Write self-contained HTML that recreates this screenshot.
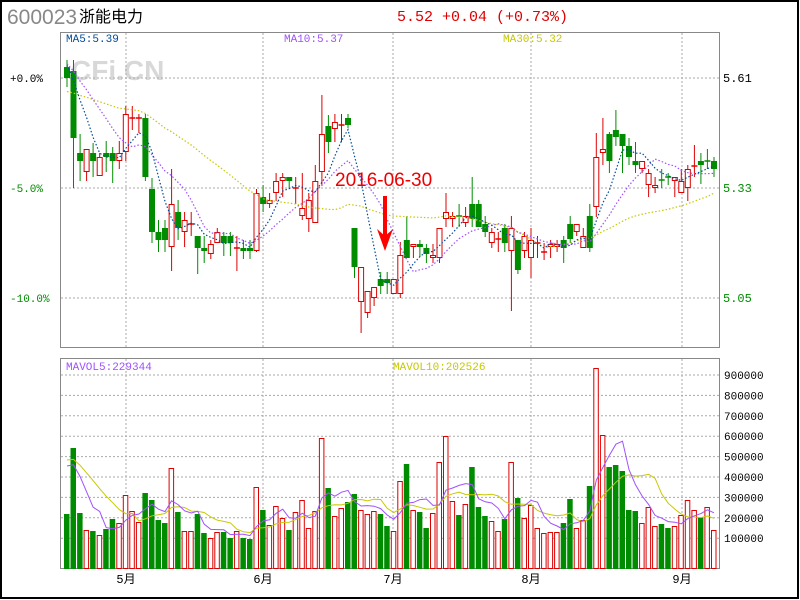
<!DOCTYPE html>
<html><head><meta charset="utf-8"><style>
html,body{margin:0;padding:0;background:#fff;width:800px;height:600px;overflow:hidden}
svg{display:block}
text{font-family:"Liberation Mono","Noto Sans CJK SC",monospace}
</style></head><body>
<svg id="s" width="800" height="600" xmlns="http://www.w3.org/2000/svg">
<rect x="1" y="1" width="797" height="597" fill="#fff" stroke="#000" stroke-width="2"/>
<text x="7" y="24" font-size="21" fill="#888" style="font-family:'Liberation Sans',sans-serif">600023</text>
<text x="79" y="22" font-size="16" fill="#000" style="font-family:'Liberation Sans','Noto Sans CJK SC',sans-serif">浙能电力</text>
<text x="397" y="21" font-size="15" fill="#d00">5.52 +0.04 (+0.73%)</text>
<text x="71" y="80" font-size="28" font-weight="bold" fill="#d8d8d8" style="font-family:'Liberation Sans',sans-serif">CFi.CN</text>
<g id="g"></g>
</svg>
<script>
var g=document.getElementById('g'),S='';
var cols="GGGRGRGGRRRRGGGGRGRRGGRRGGRGGRGRRRGRRRRRGRRGGRRRGGRRGRGGRRRRGRGGGRRGRGRRRRRRGGRRGRRGGGGGRRRGGRRRRG";
var vt=[514,448,513,530,531,535,529,519,523,495,511,522,493,500,520,523,468,512,531,531,514,533,538,532,532,538,531,538,539,487,510,525,506,518,530,512,500,528,511,438,488,516,508,502,494,510,514,511,514,526,531,481,464,510,512,528,513,462,436,501,515,504,467,507,516,521,531,519,462,498,518,505,528,533,532,532,523,499,528,520,486,368,435,467,465,471,510,511,523,507,526,524,528,526,515,500,510,517,507,530];
var c=[[67,78,60,87],[71,138,60,188],[153,161,134,181],[149,172,149,181],[153,161,143,177],[157,176,153,176],[153,157,141,172],[153,161,147,183],[153,161,141,169],[114,152,106,161],
[118,119,106,130],[118,119,114,133],[118,177,114,181],[189,232,178,243],[232,240,220,252],[228,240,220,252],[204,247,169,271],[212,228,200,240],[220,232,212,247],[224,225,212,236],
[236,248,236,274],[248,251,236,263],[244,254,240,259],[232,243,228,243],[236,243,232,256],[236,243,232,256],[248,249,236,271],[248,251,240,259],[248,251,240,259],[193,251,189,252],
[197,204,185,212],[200,204,193,208],[181,193,173,201],[177,181,173,197],[177,181,177,188],[188,189,177,204],[208,216,173,220],[200,219,193,232],[181,223,165,223],[134,172,95,185],
[126,142,115,153],[122,129,114,142],[125,126,114,142],[118,125,114,128],[228,267,228,278],[267,302,267,333],[291,313,291,318],[287,298,287,306],[279,286,272,294],[279,283,272,294],
[279,294,279,294],[255,294,242,298],[240,258,216,258],[244,247,244,258],[244,247,240,257],[248,254,244,263],[255,258,244,263],[228,258,228,263],[212,219,193,227],[216,219,212,227],
[216,217,204,227],[216,223,207,227],[204,219,177,227],[204,227,200,227],[224,232,216,237],[232,243,228,248],[239,240,232,252],[228,243,224,252],[228,251,216,311],[240,270,240,274],
[236,251,232,258],[240,258,228,278],[243,244,236,258],[252,253,243,260],[244,247,240,258],[244,247,240,252],[240,248,236,263],[224,239,216,243],[224,232,224,236],[236,248,228,248],
[216,248,204,252],[157,207,133,217],[149,153,118,165],[134,161,132,173],[130,137,110,146],[134,146,134,173],[146,157,138,165],[161,165,142,173],[161,169,161,173],[173,185,169,197],
[185,188,177,193],[180,181,169,188],[177,178,173,185],[177,181,177,197],[181,193,169,193],[169,188,165,201],[166,167,145,177],[161,165,153,184],[161,162,149,169],[161,169,157,177]];
function X(i){return 64+i*6.535;}
var vx=[126,263,393,531,682];
vx.forEach(function(x){S+='<line x1="'+x+'" y1="33" x2="'+x+'" y2="347" stroke="#aaa" stroke-dasharray="2,2"/>';S+='<line x1="'+x+'" y1="359" x2="'+x+'" y2="568" stroke="#aaa" stroke-dasharray="2,2"/>';});
[78,188,298].forEach(function(y){S+='<line x1="61" y1="'+y+'" x2="719" y2="'+y+'" stroke="#aaa" stroke-dasharray="2,2"/>';});
var vl=['900000','800000','700000','600000','500000','400000','300000','200000','100000'];
for(var k=0;k<9;k++){var y=375+k*20.4;S+='<line x1="61" y1="'+y+'" x2="719" y2="'+y+'" stroke="#aaa" stroke-dasharray="2,2"/>';S+='<text x="724" y="'+(y+4)+'" font-size="11" fill="#000">'+vl[k]+'</text>';}
S+='<rect x="60.5" y="32.5" width="659" height="315" fill="none" stroke="#888"/>';
S+='<rect x="60.5" y="358.5" width="659" height="210" fill="none" stroke="#888"/>';
var vh=[];
for(var i=0;i<100;i++){var x=X(i),t=vt[i];vh.push(569-t);
 if(cols[i]=='G')S+='<rect x="'+x.toFixed(1)+'" y="'+t+'" width="5.5" height="'+(569-t)+'" fill="#008c00"/>';
 else S+='<rect x="'+(x+0.5).toFixed(1)+'" y="'+(t+0.5)+'" width="4.5" height="'+(568-t)+'" fill="#fff" stroke="#d00"/>';}
var cl=[];
for(var i=0;i<100;i++){var x=X(i),d=c[i],r=cols[i]=='R',col=r?'#d00':'#008c00';cl.push(r?d[0]:d[1]);
 var cx=(x+3).toFixed(1);
 S+='<line x1="'+cx+'" y1="'+d[2]+'" x2="'+cx+'" y2="'+d[3]+'" stroke="'+col+'"/>';
 if(d[1]-d[0]<=1)S+='<line x1="'+x.toFixed(1)+'" y1="'+d[0]+'" x2="'+(x+6).toFixed(1)+'" y2="'+d[0]+'" stroke="'+col+'" stroke-width="1.5"/>';
 else if(r)S+='<rect x="'+(x+0.5).toFixed(1)+'" y="'+(d[0]+0.5)+'" width="5" height="'+(d[1]-d[0]-1)+'" fill="#fff" stroke="#d00"/>';
 else S+='<rect x="'+x.toFixed(1)+'" y="'+d[0]+'" width="6" height="'+(d[1]-d[0])+'" fill="#008c00"/>';}
function ma(arr,n,pad,dash,color,sw){var p='';for(var i=0;i<arr.length;i++){var s=0;for(var j=i-n+1;j<=i;j++)s+=(j<0?pad:arr[j]);var v=s/n;p+=(i?'L':'M')+(X(i)+3).toFixed(1)+' '+v.toFixed(1);}
 return '<path d="'+p+'" fill="none" stroke="'+color+'" stroke-width="'+(sw||1.2)+'"'+(dash?' stroke-dasharray="1.5,2"':'')+'/>';}
S+=ma(cl,30,92,1,'#c8c800');S+=ma(cl,10,62,1,'#a050ff');S+=ma(cl,5,62,1,'#004c9a');
function vma(n,pad,color){var p='';for(var i=0;i<100;i++){var s=0;for(var j=i-n+1;j<=i;j++)s+=(j<0?pad:vh[j]);p+=(i?'L':'M')+(X(i)+3).toFixed(1)+' '+(569-s/n).toFixed(1);}return '<path d="'+p+'" fill="none" stroke="'+color+'"/>';}
S+=vma(10,115,'#c8c800');S+=vma(5,115,'#a050ff');
S+='<text x="66" y="42" font-size="11" fill="#004c9a">MA5:5.39</text>';
S+='<text x="284" y="42" font-size="11" fill="#a050ff">MA10:5.37</text>';
S+='<text x="503" y="42" font-size="11" fill="#c8c800">MA30:5.32</text>';
S+='<text x="66" y="370" font-size="11" fill="#a050ff">MAVOL5:229344</text>';
S+='<text x="393" y="370" font-size="11" fill="#c8c800">MAVOL10:202526</text>';
S+='<text x="10" y="82" font-size="11" fill="#000">+0.0%</text>';
S+='<text x="10" y="192" font-size="11" fill="#008c00">-5.0%</text>';
S+='<text x="10" y="302" font-size="11" fill="#008c00">-10.0%</text>';
S+='<text x="723" y="82" font-size="12" fill="#000">5.61</text>';
S+='<text x="723" y="192" font-size="12" fill="#008c00">5.33</text>';
S+='<text x="723" y="302" font-size="12" fill="#008c00">5.05</text>';
var mn=['5月','6月','7月','8月','9月'];
vx.forEach(function(x,k){S+='<text x="'+x+'" y="583" font-size="12" fill="#000" text-anchor="middle">'+mn[k]+'</text>';});
S+='<text x="335" y="186" font-size="19" fill="#e00" style="font-family:\'Liberation Sans\',sans-serif">2016-06-30</text>';
S+='<rect x="383" y="196" width="4" height="40" fill="#f00"/><path d="M377 229 L385 251 L393 229 L385 236 Z" fill="#f00"/>';
g.innerHTML=S;
</script>
</body></html>
